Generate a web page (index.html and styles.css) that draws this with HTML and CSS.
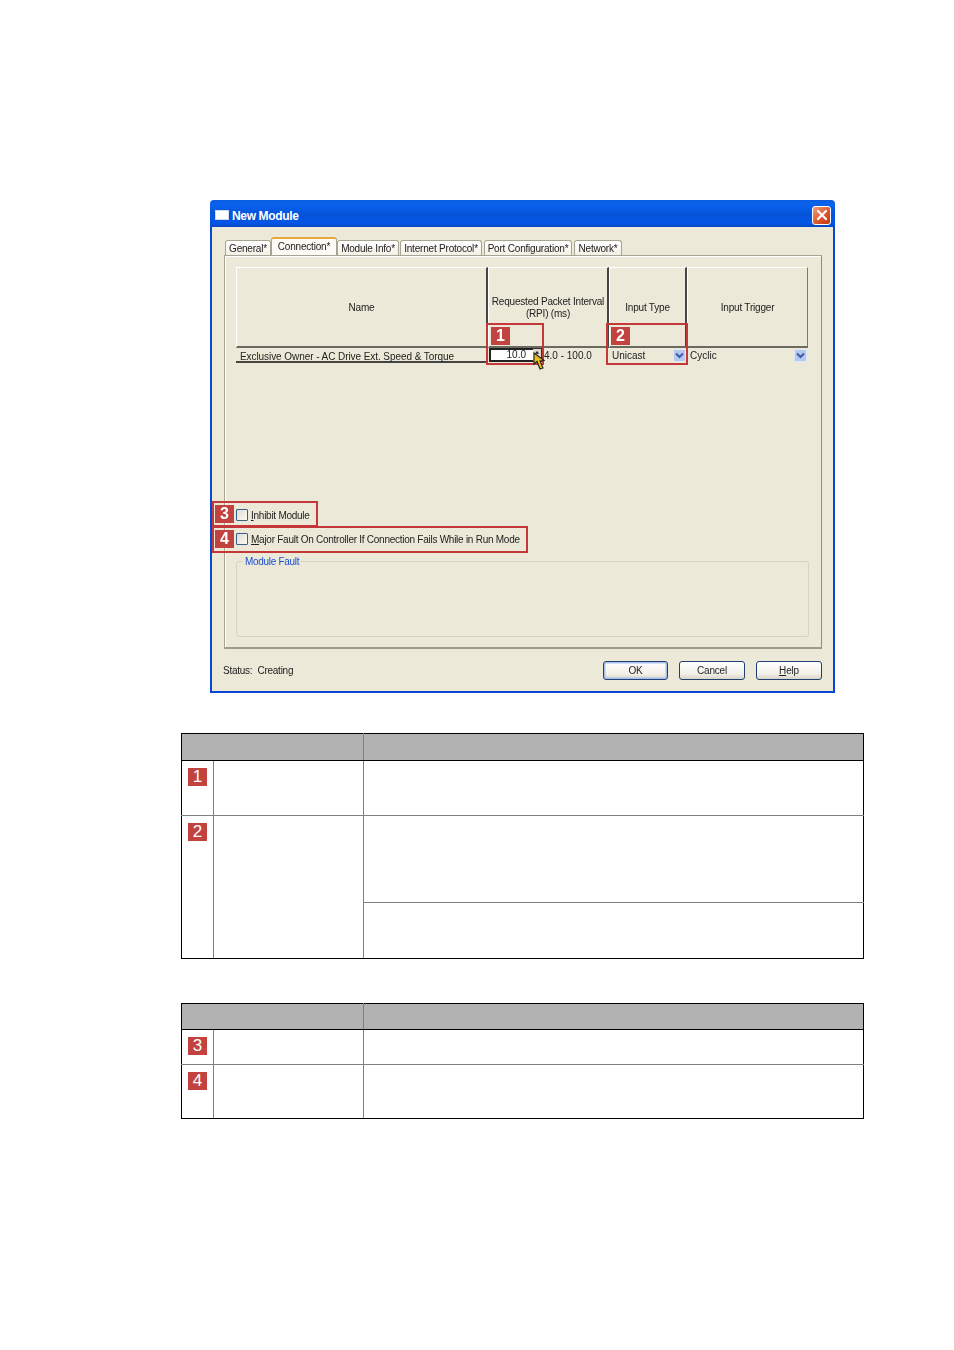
FILE: index.html
```html
<!DOCTYPE html>
<html lang="en">
<head>
<meta charset="utf-8">
<title>New Module</title>
<link rel="stylesheet" href="styles.css">
</head>
<body>
<main class="page">
  <section class="dialog">
    <header class="titlebar">
      <span class="title-icon"></span>
      <span class="title-text">New Module</span>
      <span class="close">
        <svg viewBox="0 0 12 12" width="12" height="12"><path d="M2 2 L10 10 M10 2 L2 10" stroke="#fff" stroke-width="2.2" stroke-linecap="round" fill="none"/></svg>
      </span>
    </header>
    <div class="dialog-body">
      <nav class="tabs">
        <span class="tab t-general">General*</span>
        <span class="tab active t-conn">Connection*</span>
        <span class="tab t-info">Module Info*</span>
        <span class="tab t-ip">Internet Protocol*</span>
        <span class="tab t-port">Port Configuration*</span>
        <span class="tab t-net">Network*</span>
      </nav>
      <div class="panel">
        <div class="grid">
          <div class="head">Name</div>
          <div class="head">Requested Packet Interval<br>(RPI) (ms)</div>
          <div class="head">Input Type</div>
          <div class="head head-last">Input Trigger</div>
          <div class="cell cell-name">Exclusive Owner - AC Drive Ext. Speed &amp; Torque</div>
          <div class="cell cell-rpi">
            <span class="rpi-input">10.0</span>
            <span class="spin">
              <svg viewBox="0 0 9 12" width="9" height="12"><path d="M4.5 1.5 L7 4.5 H2 Z M4.5 10.5 L7 7.5 H2 Z" fill="#222"/></svg>
            </span>
            <span class="range">4.0 - 100.0</span>
          </div>
          <div class="cell cell-select">
            <span>Unicast</span>
            <svg class="drop" viewBox="0 0 13 13" width="13" height="13"><rect x="0.5" y="0.5" width="12" height="12" rx="1.5" fill="#b5c8ee" stroke="#dfe7f8"/><path d="M3 4.5 L6.5 8 L10 4.5" stroke="#3f5ea8" stroke-width="2" fill="none"/></svg>
          </div>
          <div class="cell cell-select">
            <span>Cyclic</span>
            <svg class="drop" viewBox="0 0 13 13" width="13" height="13"><rect x="0.5" y="0.5" width="12" height="12" rx="1.5" fill="#b5c8ee" stroke="#dfe7f8"/><path d="M3 4.5 L6.5 8 L10 4.5" stroke="#3f5ea8" stroke-width="2" fill="none"/></svg>
          </div>
        </div>
        <div class="options">
          <label class="option"><span class="check"></span><span><u>I</u>nhibit Module</span></label>
          <label class="option"><span class="check"></span><span><u>M</u>ajor Fault On Controller If Connection Fails While in Run Mode</span></label>
        </div>
        <fieldset class="fault"><legend>Module Fault</legend></fieldset>
      </div>
      <footer class="foot">
        <span class="status">Status:&nbsp; Creating</span>
        <div class="buttons">
          <span class="btn btn-default">OK</span>
          <span class="btn">Cancel</span>
          <span class="btn"><u>H</u>elp</span>
        </div>
      </footer>
    </div>
    <div class="mark m1"><span class="badge small">1</span></div>
    <div class="mark m2"><span class="badge small">2</span></div>
    <div class="mark m3"><span class="badge small">3</span></div>
    <div class="mark m4"><span class="badge small">4</span></div>
    <svg class="cursor" viewBox="0 0 12 20" width="12" height="20"><path d="M1 1 L1 12 L4 9.5 L7 17 L10 16 L7 9 L11 8.5 Z" fill="#e3c21c" stroke="#222" stroke-width="1.1"/></svg>
  </section>

  <table class="info first">
    <colgroup><col class="c1"><col class="c2"><col class="c3"></colgroup>
    <tr class="hrow"><th colspan="2"></th><th></th></tr>
    <tr class="r54"><td class="num"><span class="badge">1</span></td><td></td><td></td></tr>
    <tr class="r87"><td class="num" rowspan="2"><span class="badge">2</span></td><td rowspan="2"></td><td></td></tr>
    <tr class="r56"><td></td></tr>
  </table>

  <table class="info second">
    <colgroup><col class="c1"><col class="c2"><col class="c3"></colgroup>
    <tr class="hrow2"><th colspan="2"></th><th></th></tr>
    <tr class="r35"><td class="num"><span class="badge">3</span></td><td></td><td></td></tr>
    <tr class="r53"><td class="num"><span class="badge">4</span></td><td></td><td></td></tr>
  </table>
</main>
</body>
</html>
```

FILE: styles.css
```css
* { box-sizing: border-box; }
html, body { margin: 0; padding: 0; background: #fff; }
body { font-family: "Liberation Sans", Arial, sans-serif; color: #000; }
.page { width: 954px; height: 1350px; padding-top: 200px; }

/* dialog */
.dialog {
  position: relative;
  width: 625px;
  height: 493px;
  margin-left: 210px;
  display: flex;
  flex-direction: column;
  border-radius: 4px 4px 0 0;
  background: #ece9d8;
  font-size: 10px;
  color: #222;
  letter-spacing: -0.2px;
  filter: blur(0.45px);
}
.titlebar {
  height: 27px;
  flex: none;
  display: flex;
  align-items: center;
  padding: 3px 4px 0 5px;
  border-radius: 4px 4px 0 0;
  background: linear-gradient(#0a5be0 0%, #0a63ee 15%, #0553da 55%, #0456e6 85%, #0a46c4 100%);
}
.title-icon { width: 14px; height: 10px; background: #fff; border: 1px solid #cfd8ee; margin-right: 3px; }
.title-text { font-weight: bold; font-size: 12px; letter-spacing: -0.35px; color: #fff; flex: 1; padding-top: 2px; }
.close {
  width: 19px; height: 19px;
  display: flex; align-items: center; justify-content: center;
  border: 1px solid #fff; border-radius: 3px;
  background: linear-gradient(135deg, #f0a080, #d9522a 60%, #c23a1a);
}
.dialog-body {
  flex: 1;
  display: flex;
  flex-direction: column;
  padding: 10px 11px 0 12px;
  border: solid #0a47d6;
  border-width: 0 2px 2px 2px;
}
.tabs { height: 18px; flex: none; display: flex; align-items: flex-end; padding-left: 1px; position: relative; z-index: 1; }
.tab {
  height: 15px;
  display: flex; align-items: center; justify-content: center;
  border: 1px solid #a6a594;
  border-bottom: 0;
  border-radius: 3px 3px 0 0;
  background: linear-gradient(#fff, #f2f0e6);
  white-space: nowrap;
}
.tab.active {
  height: 18px;
  padding-bottom: 2px;
  border-top: 2px solid #e8a73a;
  background: #fbfaf5;
}
.t-general { width: 46px; }
.t-conn { width: 66px; }
.t-info { width: 62px; }
.t-ip { width: 82px; margin-left: 1px; }
.t-port { width: 88px; margin-left: 2px; }
.t-net { width: 48px; margin-left: 2px; }

.panel {
  width: 598px;
  height: 394px;
  flex: none;
  padding: 11px 12px 0 11px;
  border: 1px solid #a6a594;
  border-right-color: #8f8e80;
  border-bottom: 2px solid #9c9b8c;
  box-shadow: inset 1px 1px 0 #fff;
}
.grid {
  width: 572px;
  display: grid;
  grid-template-columns: 252px 121px 78px 121px;
  grid-template-rows: 81px 15px;
}
.head {
  display: flex; align-items: center; justify-content: center;
  text-align: center;
  white-space: nowrap;
  border-top: 1px solid #fff;
  border-left: 1px solid #fff;
  border-right: 2px solid #444;
  border-bottom: 2px solid #6a6a60;
  line-height: 12px;
  padding-top: 1px;
}
.head-last { border-right: 1px solid #777; }
.cell { display: flex; align-items: center; white-space: nowrap; }
.cell-name { border-bottom: 2px solid #444; padding: 3px 0 0 4px; letter-spacing: -0.07px; }
.cell-rpi { padding-left: 1px; padding-bottom: 1px; }
.rpi-input {
  width: 44px; height: 14px;
  background: #fff;
  border: 2px solid #222;
  border-right: 0;
  line-height: 10px;
  text-align: right;
  padding-right: 7px;
  letter-spacing: 0;
}
.spin { width: 9px; height: 14px; background: #ddd9c8; border: 1px solid #333; border-left: 0; display: flex; align-items: center; }
.range { margin-left: 2px; letter-spacing: 0; }
.cell-select { justify-content: space-between; padding: 0 1px 1px 3px; letter-spacing: 0; }
.drop { flex: none; }

.options { margin-top: 146px; display: flex; flex-direction: column; gap: 12px; }
.option { display: flex; align-items: center; gap: 3px; height: 12px; letter-spacing: -0.26px; }
.check {
  width: 12px; height: 12px;
  background: linear-gradient(135deg, #dcdccf, #fbfbf8);
  border: 1px solid #3a5e87;
  border-radius: 1px;
}
.fault {
  width: 573px;
  height: 81px;
  margin: 11px 0 0 0;
  padding: 0 0 0 6px;
  border: 1px solid #d6d3bf;
  border-radius: 3px;
}
.fault legend { color: #1a4fd0; padding: 0 2px; line-height: 10px; position: relative; top: 1px; letter-spacing: -0.3px; }

.foot { flex: 1; display: flex; align-items: center; justify-content: space-between; padding: 2px 0 1px 0; }
.status { margin-left: -1px; letter-spacing: -0.25px; }
.buttons { display: flex; gap: 11px; }
.btn {
  width: 66px; height: 19px;
  display: flex; align-items: center; justify-content: center;
  border: 1px solid #1f3f75;
  border-radius: 3px;
  background: linear-gradient(#fff, #f2f0e8 70%, #d8d5c6);
}
.btn-default { width: 65px; box-shadow: inset 0 0 0 1.5px #a8c0ea; }

/* callouts */
.mark { position: absolute; border: 2px solid #c5383a; }
.m1 { left: 276px; top: 123px; width: 58px; height: 42px; }
.m2 { left: 396px; top: 123px; width: 82px; height: 42px; }
.m3 { left: 2px; top: 301px; width: 106px; height: 26px; }
.m4 { left: 2px; top: 326px; width: 316px; height: 27px; }
.badge {
  display: flex; align-items: center; justify-content: center;
  width: 19px; height: 18px;
  background: #c24240;
  color: #fff;
  letter-spacing: 0;
  font: 17px/18px "Liberation Sans", Arial, sans-serif;
}
.mark .badge { position: absolute; left: 1px; top: 2px; font-weight: bold; font-size: 16px; }
.m1 .badge, .m2 .badge { left: 3px; top: 2px; }
.cursor { position: absolute; left: 323px; top: 152px; }

/* tables */
.info {
  width: 683px;
  margin-left: 181px;
  border-collapse: collapse;
  table-layout: fixed;
  border: 1px solid #000;
}
.first { margin-top: 40px; }
.second { margin-top: 44px; }
.c1 { width: 32px; }
.c2 { width: 150px; }
.info th { background: #b2b2b2; border-right: 1px solid #808080; border-bottom: 1px solid #000; padding: 0; }
.info th:last-child { border-right: 0; }
.info td { padding: 0; border: 1px solid #808080; vertical-align: top; }
.info td.num { padding: 7px 0 0 6px; }
.info td:last-child { border-right: 1px solid #000; }
.info tr:last-child td, .info td[rowspan] { border-bottom: 1px solid #000; }
.info td:first-child { border-left: 1px solid #000; }
.hrow { height: 27px; }
.hrow2 { height: 26px; }
.r54 { height: 55px; }
.r53 { height: 54px; }
.r87 { height: 87px; }
.r56 { height: 56px; }
.r35 { height: 35px; }
```
